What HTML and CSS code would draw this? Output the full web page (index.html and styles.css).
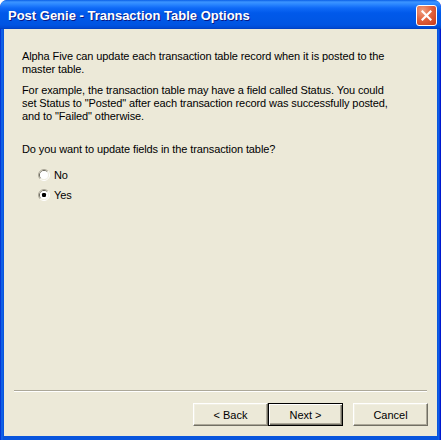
FILE: index.html
```html
<!DOCTYPE html>
<html>
<head>
<meta charset="utf-8">
<link rel="stylesheet" href="styles.css">
</head>
<body>
<div class="window">
  <div class="titlebar">
    <span class="title">Post Genie - Transaction Table Options</span>
    <button class="close" aria-label="Close">
      <svg width="11" height="11" viewBox="0 0 11 11"><path d="M1.5 1.5 L9.5 9.5 M9.5 1.5 L1.5 9.5" stroke="#fff" stroke-width="2.2" stroke-linecap="square"/></svg>
    </button>
  </div>
  <div class="client">
    <div class="content">
      <p class="para">Alpha Five can update each transaction table record when it is posted to the<br>master table.</p>
      <p class="para">For example, the transaction table may have a field called Status. You could<br>set Status to "Posted" after each transaction record was successfully posted,<br>and to "Failed" otherwise.</p>
      <p class="question">Do you want to update fields in the transaction table?</p>
      <div class="radios">
        <label class="radio">
          <svg class="rb" width="12" height="12" viewBox="0 0 12 12">
            <path d="M2.11 9.89 A5.5 5.5 0 0 1 9.89 2.11" fill="none" stroke="#aca899"/>
            <path d="M9.89 2.11 A5.5 5.5 0 0 1 2.11 9.89" fill="none" stroke="#ffffff"/>
            <path d="M2.82 9.18 A4.5 4.5 0 0 1 9.18 2.82" fill="none" stroke="#716f64"/>
            <path d="M9.18 2.82 A4.5 4.5 0 0 1 2.82 9.18" fill="none" stroke="#f1efe2"/>
            <circle cx="6" cy="6" r="4" fill="#ffffff"/>
          </svg>
          <span>No</span>
        </label>
        <label class="radio">
          <svg class="rb" width="12" height="12" viewBox="0 0 12 12">
            <path d="M2.11 9.89 A5.5 5.5 0 0 1 9.89 2.11" fill="none" stroke="#aca899"/>
            <path d="M9.89 2.11 A5.5 5.5 0 0 1 2.11 9.89" fill="none" stroke="#ffffff"/>
            <path d="M2.82 9.18 A4.5 4.5 0 0 1 9.18 2.82" fill="none" stroke="#716f64"/>
            <path d="M9.18 2.82 A4.5 4.5 0 0 1 2.82 9.18" fill="none" stroke="#f1efe2"/>
            <circle cx="6" cy="6" r="4" fill="#ffffff"/>
            <rect x="4" y="4" width="4" height="4" rx="1.2" fill="#000"/>
          </svg>
          <span>Yes</span>
        </label>
      </div>
    </div>
    <div class="footer">
      <div class="separator"></div>
      <div class="buttons">
        <button class="btn">&lt; Back</button>
        <button class="btn default">Next &gt;</button>
        <button class="btn cancel">Cancel</button>
      </div>
    </div>
  </div>
</div>
</body>
</html>
```

FILE: styles.css
```css
html, body {
  margin: 0;
  padding: 0;
  width: 441px;
  height: 440px;
  overflow: hidden;
  background: #ffffff;
}
.window {
  width: 441px;
  height: 440px;
  box-sizing: border-box;
  display: flex;
  flex-direction: column;
  background: linear-gradient(to right, #0019cf 0px, #0855dd 1px, #166aee 2px, #0855dd 3px, #0855dd 438px, #166aee 439px, #0019cf 440px);
  border-radius: 7px 7px 0 0;
  overflow: hidden;
}
.titlebar {
  height: 29px;
  flex: none;
  display: flex;
  align-items: center;
  padding: 0 4px 0 8px;
  background: linear-gradient(to bottom, #0a5fe6 0px, #3c95ff 2px, #2d89ff 4px, #0f6af7 8px, #0059ea 13px, #0057e6 20px, #0054e2 25px, #0049d2 28px, #003bb8 29px);
  border-radius: 7px 7px 0 0;
}
.title {
  flex: 1;
  color: #ffffff;
  font-family: "Liberation Sans", Arial, sans-serif;
  font-weight: bold;
  font-size: 13px;
  text-shadow: 1px 1px 0 #0a1883;
  white-space: nowrap;
  padding-top: 1px;
}
.close {
  width: 21px;
  height: 21px;
  padding: 0;
  margin-top: 1px;
  border: 1px solid #ffffff;
  border-radius: 3px;
  background: radial-gradient(circle at 30% 25%, #f0a182 0%, #e2643f 45%, #c8391a 100%);
  display: flex;
  align-items: center;
  justify-content: center;
}
.client {
  flex: 1;
  margin: 0 4px 4px 4px;
  background: #ece9d8;
  display: flex;
  flex-direction: column;
  font-family: "Liberation Sans", Arial, sans-serif;
  font-size: 11px;
  letter-spacing: -0.1px;
  color: #000000;
}
.content {
  flex: 1;
  padding: 21px 18px 0 18px;
}
.para {
  margin: 0 0 8px 0;
  line-height: 13px;
}
.question {
  margin: 20px 0 9px 0;
  line-height: 13px;
}
.radios {
  display: flex;
  flex-direction: column;
  padding-left: 16px;
}
.radio {
  display: flex;
  align-items: center;
  height: 20px;
  gap: 4px;
}
.rb {
  flex: none;
}
.footer {
  flex: none;
  padding: 0 10px 10px 10px;
}
.separator {
  height: 1px;
  background: #aca899;
  border-bottom: 1px solid #ffffff;
}
.buttons {
  display: flex;
  justify-content: flex-end;
  padding-top: 11px;
  margin-right: -1px;
}
.btn {
  width: 75px;
  height: 23px;
  box-sizing: border-box;
  margin: 0;
  padding: 0;
  font-family: "Liberation Sans", Arial, sans-serif;
  font-size: 11px;
  color: #000000;
  background: #ece9d8;
  border: 1px solid;
  border-color: #ffffff #716f64 #716f64 #ffffff;
  box-shadow: inset -1px -1px 0 #aca899, inset 1px 1px 0 #f1efe2;
}
.btn.default {
  border: 1px solid #000000;
  box-shadow: inset 1px 1px 0 #ffffff, inset -1px -1px 0 #716f64, inset -2px -2px 0 #aca899;
}
.btn.cancel {
  margin-left: 10px;
}
```
